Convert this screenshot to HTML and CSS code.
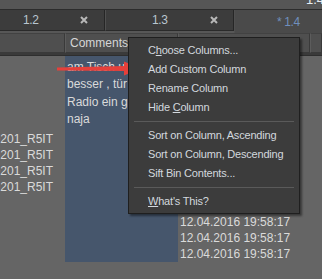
FILE: index.html
```html
<!DOCTYPE html>
<html>
<head>
<meta charset="utf-8">
<link rel="stylesheet" href="styles.css">
</head>
<body>
<div class="app">
  <div class="topbar"><span class="top-title">* 1.4</span></div>
  <div class="tabs">
    <div class="tab t1"><span class="lbl">1.2</span><svg class="x" width="8" height="8" viewBox="0 0 8 8"><path d="M1 1L7 7M7 1L1 7" stroke="#b8b8b8" stroke-width="2"/></svg></div>
    <div class="tab t2"><span class="lbl">1.3</span><svg class="x" width="8" height="8" viewBox="0 0 8 8"><path d="M1 1L7 7M7 1L1 7" stroke="#b8b8b8" stroke-width="2"/></svg></div>
    <div class="tab t3 active"><span class="lbl">* 1.4</span></div>
  </div>
  <div class="gap"></div>
  <div class="header">
    <div class="hc h1"></div>
    <div class="hc h2">Comments</div>
    <div class="hc h3"></div>
    <div class="hc h4"></div>
  </div>
  <div class="hsep"></div>
  <div class="grid">
    <div class="col names">
      <div class="cell"><span>BIN_20160412_0201_R5IT</span></div>
      <div class="cell"><span>BIN_20160412_0201_R5IT</span></div>
      <div class="cell"><span>BIN_20160412_0201_R5IT</span></div>
      <div class="cell"><span>BIN_20160412_0201_R5IT</span></div>
    </div>
    <div class="col comments">
      <div class="line">am Tisch u</div>
      <div class="line">besser , tür</div>
      <div class="line">Radio ein g</div>
      <div class="line">naja</div>
    </div>
    <div class="col dates">
      <div class="line">12.04.2016 19:58:17</div>
      <div class="line">12.04.2016 19:58:17</div>
      <div class="line">12.04.2016 19:58:17</div>
    </div>
  </div>

  <svg class="arrow" width="90" height="20" viewBox="0 0 90 20">
    <polygon points="2,7.5 71,6 71,11 2,10.5" fill="#e5403b"/>
    <polygon points="69,1.5 86,8.5 69,15.5" fill="#e5403b"/>
  </svg>

  <div class="menu">
    <div class="item">C<u>h</u>oose Columns...</div>
    <div class="item">Add Custom Column</div>
    <div class="item">Rename Column</div>
    <div class="item">Hide <u>C</u>olumn</div>
    <div class="sep"></div>
    <div class="item">Sort on Column, Ascending</div>
    <div class="item">Sort on Column, Descending</div>
    <div class="item">Sift Bin Contents...</div>
    <div class="sep"></div>
    <div class="item"><u>W</u>hat's This?</div>
  </div>
</div>
</body>
</html>
```

FILE: styles.css
```css
html, body {
  margin: 0;
  padding: 0;
  background: #656565;
}
.app {
  position: relative;
  width: 322px;
  height: 279px;
  overflow: hidden;
  font-family: "Liberation Sans", Arial, sans-serif;
  font-size: 12px;
  color: #dadada;
  background: #656565;
}
.topbar {
  height: 9px;
  background: #565656;
  border-bottom: 1px solid #2c2c2c;
  display: flex;
  justify-content: flex-end;
  align-items: flex-end;
  overflow: hidden;
}
.top-title {
  font-size: 13px;
  line-height: 13px;
  margin-bottom: 3px;
  margin-right: -2px;
  color: #e6ecf2;
}
.tabs {
  height: 21px;
  display: flex;
  background: #3c3c3c;
}
.tab {
  display: flex;
  align-items: center;
  box-sizing: border-box;
  height: 21px;
  background: #3c3c3c;
  border-right: 1px solid #262626;
  border-left: 1px solid #505050;
  border-bottom: 1px solid #2a2a2a;
  color: #b9c6d0;
  font-size: 12px;
  letter-spacing: -0.4px;
}
.t1 { width: 105px; padding-left: 23px; border-left: none; }
.t1 .lbl { width: 57px; }
.t2 { width: 129px; padding-left: 46px; }
.t2 .lbl { width: 58px; }
.t3 { flex: 1; padding-left: 42px; border-right: none; }
.tab.active {
  background: #4a4a4a;
  border-bottom: none;
  height: 23px;
  color: #6f8fbd;
}
.x { display: block; }
.gap {
  height: 2px;
  background: #575757;
}
.header {
  height: 20px;
  display: flex;
  background: #4f4f4f;
}
.hc {
  box-sizing: border-box;
  height: 20px;
  border: 1px solid #3a3a3a;
  border-left-color: #5c5c5c;
  border-top-color: #424242;
  color: #d6d6d6;
  line-height: 18px;
  padding-left: 4px;
}
.h1 { width: 65px; border-left: none; }
.h2 { width: 113px; white-space: nowrap; overflow: hidden; }
.h3 { width: 132px; }
.h4 { flex: 1; }
.hsep {
  height: 3px;
  background: #3a3a3a;
  border-bottom: 1px solid #2e2e2e;
  box-sizing: border-box;
}
.grid {
  display: grid;
  grid-template-columns: 65px 113px 1fr;
  height: 206px;
}
.col {
  overflow: hidden;
}
.names {
  padding-top: 75px;
}
.cell {
  display: flex;
  justify-content: flex-end;
  white-space: nowrap;
  height: 16px;
  line-height: 16px;
  padding-right: 12px;
  overflow: hidden;
}
.comments {
  background: #46566c;
  padding-top: 3px;
  padding-left: 2px;
  white-space: nowrap;
}
.comments .line {
  line-height: 17.4px;
  width: 61px;
  overflow: hidden;
}
.dates {
  padding-top: 158px;
  padding-left: 2px;
  white-space: nowrap;
}
.dates .line {
  line-height: 16px;
}
.arrow {
  position: absolute;
  left: 55px;
  top: 60px;
}
.menu {
  position: absolute;
  left: 128px;
  top: 37px;
  width: 170px;
  padding: 3px 0 2px 0;
  background: #3c3c3c;
  border: 1px solid #1f1f1f;
  box-shadow: 2px 2px 2px rgba(0, 0, 0, 0.45);
  color: #d3d8de;
  font-size: 11px;
  letter-spacing: -0.2px;
}
.item {
  height: 19px;
  line-height: 19px;
  padding-left: 19px;
  white-space: nowrap;
}
.item u {
  text-decoration: underline;
}
.sep {
  height: 1px;
  margin: 4px 5px;
  background: #5a5a5a;
}
```
